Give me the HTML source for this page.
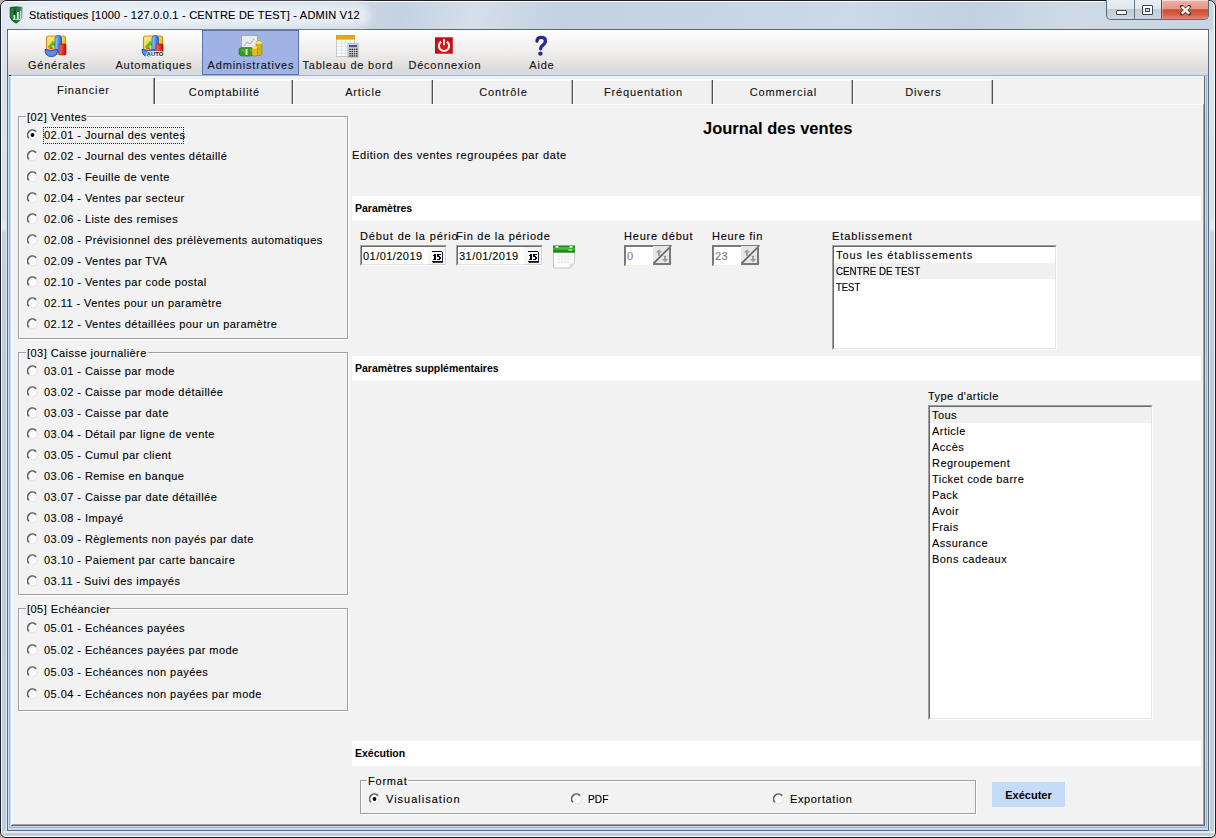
<!DOCTYPE html><html><head><meta charset="utf-8"><style>
*{margin:0;padding:0;box-sizing:border-box}
html,body{width:1216px;height:838px;overflow:hidden;background:#b8b2a8;font-family:"Liberation Sans",sans-serif;font-size:12px;color:#000}
.a{position:absolute}
.t{position:absolute;white-space:nowrap;line-height:14px;height:14px;color:#000;font-size:11px;letter-spacing:.45px;-webkit-text-stroke:0.1px #000;margin-top:-1px}
.bd{font-weight:bold;font-size:10.5px;letter-spacing:0;-webkit-text-stroke:0;margin-top:0}
#win{left:0;top:0;width:1216px;height:838px;border:1px solid #1a1e26;border-radius:7px 7px 6px 6px;background:linear-gradient(#dae4ee 0px,#d4e0ea 215px,#e2ecf6 226px,#c2d2de 232px,#b9ccd8 400px,#bccfdb 838px);overflow:hidden}
#winhl{left:0;top:0;width:1214px;height:836px;border:1px solid rgba(255,255,255,.9);border-radius:6px 6px 5px 5px}
#tbar{left:2px;top:1px;width:1210px;height:28px;background:linear-gradient(100deg,#e0e8f0 0%,#d4dee9 20%,#c5d2e0 33%,#d5dfea 39%,#c4d1df 46%,#c8d5e3 60%,#cdd9e6 70%,#c3d0de 80%,#cfdae6 88%,#c8d4e1 100%)}
#fbot{left:2px;top:830px;width:1212px;height:6px;background:linear-gradient(#e2eaee 0,#e2eaee 2px,#bfcdd9 2px,#c2cfdb 100%)}
#client{left:7px;top:29px;width:1202px;height:802px;border:1px solid #5c6774;background:#f2f2f2}
#toolbar{left:8px;top:30px;width:1200px;height:46px;border-bottom:1px solid #a3b3c6;background:linear-gradient(#fefefe 0px,#f7f6f5 12px,#e8e7e6 30px,#dddad9 40px,#d6dce4 43px,#d2d9e2 45px)}
#bluefr{left:8px;top:76px;width:1200px;height:754px;background:#c4dcfa}
#tabctl{left:11px;top:76px;width:1194px;height:750px;background:#f2f2f2;border-right:1px solid #696969;border-bottom:1px solid #696969}
#page{left:11px;top:104px;width:1193px;height:721px;border-top:1px solid #fff;border-left:1px solid #fff;border-right:1px solid #a0a0a0;border-bottom:1px solid #a0a0a0;background:#f2f2f2}
.tab{position:absolute;top:80px;height:24px;background:#f0f0f0;border-left:1px solid #fff;border-right:1px solid #505050;box-shadow:inset -1px 0 0 #b8b8b8, inset 0 1px 0 #fafafa}
.grp{position:absolute;border:1px solid #a0a0a0;box-shadow:1px 1px 0 #fff, inset 1px 1px 0 #fff}
.gl{position:absolute;background:#f2f2f2;padding:0 1px 0 0;line-height:14px;height:14px;white-space:nowrap;font-size:11px;letter-spacing:.45px;-webkit-text-stroke:0.1px #000;margin-top:-1px}
.rad{position:absolute;width:12px;height:12px}
.band{position:absolute;left:352px;width:849px;height:25px;background:#fff}
.sunk{position:absolute;background:#fff;border-top:1px solid #a0a0a0;border-left:1px solid #a0a0a0;border-right:1px solid #fff;border-bottom:1px solid #fff}
.sunk>.in{position:absolute;left:0;top:0;right:0;bottom:0;border-top:1px solid #696969;border-left:1px solid #696969;border-right:1px solid #e3e3e3;border-bottom:1px solid #e3e3e3}
</style></head><body>
<div id="win" class="a"><div id="tbar" class="a"></div><div id="fbot" class="a"></div><div id="winhl" class="a"></div></div>
<div id="client" class="a"></div>
<div id="toolbar" class="a"></div>
<div class="a" style="left:6px;top:29px;width:1px;height:802px;background:#e2eaee"></div>
<div class="a" style="left:1209px;top:29px;width:1px;height:802px;background:#e2eaee"></div>
<div id="bluefr" class="a"></div>
<div class="a" style="left:9px;top:77px;width:1px;height:751px;background:#9ab8de"></div>
<div class="a" style="left:10px;top:77px;width:1px;height:750px;background:#c8d8ee"></div>
<div class="a" style="left:1206px;top:77px;width:1px;height:751px;background:#9ab8de"></div>
<div class="a" style="left:1205px;top:77px;width:1px;height:750px;background:#c8d8ee"></div>
<div id="tabctl" class="a"></div>
<div class="a" style="left:12px;top:76px;width:1192px;height:3px;background:#edf0f3"></div>
<div class="a" style="left:155px;top:79px;width:838px;height:1px;background:#fafafa"></div>
<div class="a" style="left:8px;top:826px;width:1200px;height:1px;background:#c2d4e8"></div>
<div class="a" style="left:9px;top:827px;width:1198px;height:1px;background:#9ab6da"></div>
<svg class="a" style="left:9px;top:6px" width="15" height="18" viewBox="0 0 15 18">
<path d="M1.2 1.5 Q7 0.3 13 1.3 L13 11 Q12.5 14.5 7 17.2 Q1.8 14.5 1.2 11 Z" fill="#0c6a2e" stroke="#04401a" stroke-width="0.7"/>
<path d="M2.2 2.5 L4 2.3 L4 14 Q2.5 12.5 2.2 10.5Z" fill="#1c8a40"/>
<rect x="5" y="4" width="1.8" height="9" fill="#08361a"/><rect x="9" y="3" width="1.8" height="10" fill="#08361a"/>
<rect x="4.5" y="9" width="1.8" height="4" fill="#e8f0d0"/><rect x="8" y="6" width="1.8" height="7" fill="#d8ecd0"/><rect x="11" y="5" width="1.2" height="8" fill="#c8e0c8"/>
<rect x="4" y="12.8" width="8.5" height="0.9" fill="#d8f0d8"/></svg>
<div class="a" style="left:20px;top:4px;width:350px;height:22px;border-radius:11px;background:rgba(240,246,252,.8);filter:blur(5px)"></div>
<div class="t" style="left:29px;top:8px;font-size:11px;letter-spacing:.22px;color:#000;margin-top:-1px;top:9px">Statistiques [1000 - 127.0.0.1 - CENTRE DE TEST] - ADMIN V12</div>
<div class="a" style="left:1106px;top:0px;width:103px;height:20px;border:1px solid #5b6878;border-top:none;border-radius:0 0 5px 5px;overflow:hidden;background:linear-gradient(#e9eef4 0%,#dfe6ee 45%,#c3ccd7 50%,#cdd6e0 100%)">
<div class="a" style="left:27px;top:0;width:1px;height:19px;background:#6b7785"></div>
<div class="a" style="left:54px;top:0;width:48px;height:19px;background:linear-gradient(#eeb4a4 0%,#e4968a 45%,#d04a2c 52%,#d65e46 75%,#e28a78 100%);border-left:1px solid #6b4a48;box-shadow:inset 0 1px 0 rgba(255,255,255,.5),inset 1px 0 0 rgba(255,255,255,.35),inset -1px 0 0 rgba(255,255,255,.35)"></div>
</div>
<div class="a" style="left:1116px;top:10px;width:11px;height:5px;background:#fff;border:1px solid #3c4450;border-radius:1px"></div>
<div class="a" style="left:1142px;top:5px;width:11px;height:10px;background:#fff;border:1px solid #3c4450;border-radius:1px"><div class="a" style="left:2px;top:2px;width:5px;height:4px;border:1px solid #3c4450;background:#c5ced8"></div></div>
<svg class="a" style="left:1179px;top:5px" width="13" height="11" viewBox="0 0 13 11"><path d="M2.8 1.6 L10.2 8.6 M10.2 1.6 L2.8 8.6" stroke="#4a3530" stroke-width="3.8" stroke-linecap="round"/><path d="M2.8 1.6 L10.2 8.6 M10.2 1.6 L2.8 8.6" stroke="#f8f4ee" stroke-width="2.4" stroke-linecap="butt"/></svg>
<div class="a" style="left:202px;top:30px;width:97px;height:45px;background:#9fb4e4;border:1px solid #5a72b0"></div>
<div class="t" style="left:8px;top:59px;width:97px;text-align:center;color:#161616;letter-spacing:.8px;text-indent:.8px">Générales</div>
<div class="t" style="left:105px;top:59px;width:97px;text-align:center;color:#161616;letter-spacing:.8px;text-indent:.8px">Automatiques</div>
<div class="t" style="left:202px;top:59px;width:97px;text-align:center;color:#161616;letter-spacing:.8px;text-indent:.8px">Administratives</div>
<div class="t" style="left:299px;top:59px;width:97px;text-align:center;color:#161616;letter-spacing:.8px;text-indent:.8px">Tableau de bord</div>
<div class="t" style="left:396px;top:59px;width:97px;text-align:center;color:#161616;letter-spacing:.8px;text-indent:.8px">Déconnexion</div>
<div class="t" style="left:493px;top:59px;width:97px;text-align:center;color:#161616;letter-spacing:.8px;text-indent:.8px">Aide</div>
<svg class="a" style="left:44px;top:34px" width="24" height="24" viewBox="0 0 24 24">
<defs><linearGradient id="gy0" x1="0" y1="0" x2="1" y2="1"><stop offset="0" stop-color="#fff08a"/><stop offset=".5" stop-color="#f4d030"/><stop offset="1" stop-color="#e89010"/></linearGradient>
<linearGradient id="gb0" x1="0" y1="0" x2="1" y2="0"><stop offset="0" stop-color="#8fd0ff"/><stop offset="1" stop-color="#1a5fd8"/></linearGradient>
<linearGradient id="gr0" x1="0" y1="0" x2="1" y2="0"><stop offset="0" stop-color="#ff6a5a"/><stop offset="1" stop-color="#c80808"/></linearGradient></defs>
<rect x="2.5" y="2" width="19" height="18.5" rx="2" fill="url(#gy0)" stroke="#c8901a" stroke-width="1.2"/>
<path d="M5 14 L9 9 L12 11" stroke="#58c030" stroke-width="3" fill="none"/>
<rect x="11" y="1.5" width="6.5" height="17" rx="3" fill="url(#gb0)" stroke="#2050b0" stroke-width=".7"/>
<rect x="15" y="10" width="7" height="11" rx="1" fill="url(#gr0)" stroke="#a01010" stroke-width=".6"/>
<path d="M1 15.5 Q1 22.5 7.5 22.5 Q13.5 22.5 13.5 15.5 L7.5 16.5 Z" fill="#5a8cf0" stroke="#1e48b0" stroke-width="1"/>
<path d="M5 14.5 L8 13 L9 15.5Z" fill="#e04020"/>
</svg>
<svg class="a" style="left:141px;top:34px" width="24" height="24" viewBox="0 0 24 24">
<defs><linearGradient id="gy1" x1="0" y1="0" x2="1" y2="1"><stop offset="0" stop-color="#fff08a"/><stop offset=".5" stop-color="#f4d030"/><stop offset="1" stop-color="#e89010"/></linearGradient>
<linearGradient id="gb1" x1="0" y1="0" x2="1" y2="0"><stop offset="0" stop-color="#8fd0ff"/><stop offset="1" stop-color="#1a5fd8"/></linearGradient>
<linearGradient id="gr1" x1="0" y1="0" x2="1" y2="0"><stop offset="0" stop-color="#ff6a5a"/><stop offset="1" stop-color="#c80808"/></linearGradient></defs>
<rect x="2.5" y="2" width="19" height="18.5" rx="2" fill="url(#gy1)" stroke="#c8901a" stroke-width="1.2"/>
<path d="M5 14 L9 9 L12 11" stroke="#58c030" stroke-width="3" fill="none"/>
<rect x="11" y="1.5" width="6.5" height="17" rx="3" fill="url(#gb1)" stroke="#2050b0" stroke-width=".7"/>
<rect x="15" y="10" width="7" height="11" rx="1" fill="url(#gr1)" stroke="#a01010" stroke-width=".6"/>
<path d="M1 15.5 Q1 22.5 7.5 22.5 Q13.5 22.5 13.5 15.5 L7.5 16.5 Z" fill="#5a8cf0" stroke="#1e48b0" stroke-width="1"/>
<path d="M5 14.5 L8 13 L9 15.5Z" fill="#e04020"/>
<text x="14" y="21.5" font-family="Liberation Sans" font-weight="bold" font-size="6" text-anchor="middle" fill="#111" stroke="#fff" stroke-width="1.6" paint-order="stroke">AUTO</text></svg>
<svg class="a" style="left:238px;top:34px" width="26" height="24" viewBox="0 0 26 24">
<rect x="3.5" y="1.5" width="16" height="14" fill="#ececec" stroke="#9aa0a8" stroke-width=".8"/>
<path d="M6 12 L9 8 L12 10 L16 5" stroke="#a0a8b8" stroke-width="1" fill="none"/>
<path d="M1 16 Q1 13.5 4 13.5 L13 13.5 Q16 13.5 16 16 L16 19 Q16 22 13 22 L4 22 Q1 22 1 19Z" fill="#3a9a22" stroke="#2a7012" stroke-width=".6"/>
<rect x="7.5" y="15" width="2" height="6" fill="#d8f0c8"/><path d="M4 15.5 L6 17 M12 15.5 L14 17" stroke="#8ed070" stroke-width="1"/>
<rect x="18" y="7" width="6" height="14.5" rx="2" fill="#d4b018" stroke="#a08008" stroke-width=".6"/>
<ellipse cx="21" cy="8.5" rx="3" ry="1.5" fill="#f6e070"/>
<rect x="14" y="12.5" width="5.5" height="9.5" rx="2" fill="#e0bc20" stroke="#a08008" stroke-width=".6"/>
<ellipse cx="16.75" cy="13.5" rx="2.75" ry="1.3" fill="#fae880"/>
</svg>
<svg class="a" style="left:335px;top:34px" width="25" height="24" viewBox="0 0 25 24">
<rect x="1.5" y="1.5" width="18" height="21" fill="#fafafa" stroke="#bcbcbc" stroke-width=".8"/>
<rect x="1.5" y="1.3" width="18" height="3.9" fill="#e6a812" stroke="#c89010" stroke-width=".5"/>
<path d="M2 9 H19 M2 12.5 H19 M2 16 H19 M2 19.5 H19 M6.5 5.5 V22 M11 5.5 V22 M15.5 5.5 V22" stroke="#d4dce6" stroke-width=".7"/>
<rect x="13" y="9.8" width="10" height="13.2" fill="#e8eaee" stroke="#8a92a0" stroke-width=".7"/>
<rect x="14" y="11" width="8" height="2.3" fill="#4a5878"/>
<g fill="#222"><rect x="14.3" y="14.6" width="1.5" height="1.4"/><rect x="16.5" y="14.6" width="1.5" height="1.4"/><rect x="18.7" y="14.6" width="1.5" height="1.4"/><rect x="20.9" y="14.6" width="1.5" height="1.4"/><rect x="14.3" y="16.8" width="1.5" height="1.4"/><rect x="16.5" y="16.8" width="1.5" height="1.4"/><rect x="18.7" y="16.8" width="1.5" height="1.4"/><rect x="20.9" y="16.8" width="1.5" height="1.4"/><rect x="14.3" y="19.0" width="1.5" height="1.4"/><rect x="16.5" y="19.0" width="1.5" height="1.4"/><rect x="18.7" y="19.0" width="1.5" height="1.4"/><rect x="20.9" y="19.0" width="1.5" height="1.4"/><rect x="14.3" y="21.2" width="1.5" height="1.4"/><rect x="16.5" y="21.2" width="1.5" height="1.4"/><rect x="18.7" y="21.2" width="1.5" height="1.4"/><rect x="20.9" y="21.2" width="1.5" height="1.4"/></g>
</svg>
<svg class="a" style="left:434px;top:36px" width="20" height="19" viewBox="0 0 20 19">
<defs><radialGradient id="dg" cx=".5" cy=".55" r=".6"><stop offset="0" stop-color="#e8101a"/><stop offset=".7" stop-color="#d01018"/><stop offset="1" stop-color="#b80c12"/></radialGradient></defs>
<rect x="1" y="1.3" width="17.8" height="16.4" fill="url(#dg)"/>
<path d="M7.2 5.6 A5.1 5.1 0 1 0 12.8 5.6" fill="none" stroke="#fff4f0" stroke-width="2.1"/>
<rect x="9" y="3" width="2" height="6.2" fill="#fff4f0"/>
</svg>
<svg class="a" style="left:533px;top:34px" width="16" height="24" viewBox="0 0 16 24"><path d="M4 7.2 Q4 3.3 8.3 3.3 Q12.4 3.3 12.4 6.7 Q12.4 9.3 9.7 11.3 Q7.6 12.8 7.6 14.8" fill="none" stroke="#2a2a90" stroke-width="3.3" stroke-linecap="round"/><ellipse cx="7.4" cy="19.7" rx="2.2" ry="2.1" fill="#2a2a90"/></svg>
<div class="tab" style="left:155px;width:138px"></div>
<div class="t" style="left:155px;top:86px;width:138px;text-align:center;color:#111;letter-spacing:.85px;text-indent:.85px">Comptabilité</div>
<div class="tab" style="left:293px;width:140px"></div>
<div class="t" style="left:293px;top:86px;width:140px;text-align:center;color:#111;letter-spacing:.85px;text-indent:.85px">Article</div>
<div class="tab" style="left:433px;width:140px"></div>
<div class="t" style="left:433px;top:86px;width:140px;text-align:center;color:#111;letter-spacing:.85px;text-indent:.85px">Contrôle</div>
<div class="tab" style="left:573px;width:140px"></div>
<div class="t" style="left:573px;top:86px;width:140px;text-align:center;color:#111;letter-spacing:.85px;text-indent:.85px">Fréquentation</div>
<div class="tab" style="left:713px;width:140px"></div>
<div class="t" style="left:713px;top:86px;width:140px;text-align:center;color:#111;letter-spacing:.85px;text-indent:.85px">Commercial</div>
<div class="tab" style="left:853px;width:140px"></div>
<div class="t" style="left:853px;top:86px;width:140px;text-align:center;color:#111;letter-spacing:.85px;text-indent:.85px">Divers</div>
<div class="a" style="left:12px;top:76px;width:142px;height:2px;background:#fafafa"></div>
<div class="a" style="left:153px;top:78px;width:1px;height:26px;background:#9a9a9a"></div>
<div class="a" style="left:154px;top:78px;width:1px;height:26px;background:#505050"></div>
<div class="t" style="left:12px;top:84px;width:142px;text-align:center;color:#111;letter-spacing:.85px;text-indent:.85px">Financier</div>
<div class="a" style="left:9px;top:75px;width:2px;height:1px;background:#111"></div>
<div id="pagetop" class="a" style="left:155px;top:104px;width:1049px;height:1px;background:#fff"></div>
<div class="a" style="left:11px;top:76px;width:1px;height:749px;background:#fff"></div>
<div class="a" style="left:1203px;top:104px;width:1px;height:721px;background:#a0a0a0"></div>
<div class="a" style="left:12px;top:824px;width:1192px;height:1px;background:#a0a0a0"></div>
<div class="grp" style="left:18px;top:116px;width:330px;height:223px"></div>
<div class="gl" style="left:26px;top:111px;width:61px;padding-left:1px">[02] Ventes</div>
<svg class="rad" style="left:27px;top:129px" width="12" height="12" viewBox="0 0 12 12"><circle cx="5.5" cy="6" r="4.7" fill="#fdfdfd" stroke="#e6e6e6" stroke-width="1.1"/><path d="M1.9 9.2 A4.7 4.7 0 0 1 9.1 2.6" fill="none" stroke="#5e5e5e" stroke-width="1.6"/><circle cx="5.5" cy="6" r="1.9" fill="#000"/></svg>
<div class="t" style="left:44px;top:129px;">02.01 - Journal des ventes</div>
<svg class="rad" style="left:27px;top:150px" width="12" height="12" viewBox="0 0 12 12"><circle cx="5.5" cy="6" r="4.7" fill="#fbfbfb" stroke="#e6e6e6" stroke-width="1.1"/><path d="M1.9 9.2 A4.7 4.7 0 0 1 9.1 2.6" fill="none" stroke="#5e5e5e" stroke-width="1.6"/></svg>
<div class="t" style="left:44px;top:150px;">02.02 - Journal des ventes détaillé</div>
<svg class="rad" style="left:27px;top:171px" width="12" height="12" viewBox="0 0 12 12"><circle cx="5.5" cy="6" r="4.7" fill="#fbfbfb" stroke="#e6e6e6" stroke-width="1.1"/><path d="M1.9 9.2 A4.7 4.7 0 0 1 9.1 2.6" fill="none" stroke="#5e5e5e" stroke-width="1.6"/></svg>
<div class="t" style="left:44px;top:171px;">02.03 - Feuille de vente</div>
<svg class="rad" style="left:27px;top:192px" width="12" height="12" viewBox="0 0 12 12"><circle cx="5.5" cy="6" r="4.7" fill="#fbfbfb" stroke="#e6e6e6" stroke-width="1.1"/><path d="M1.9 9.2 A4.7 4.7 0 0 1 9.1 2.6" fill="none" stroke="#5e5e5e" stroke-width="1.6"/></svg>
<div class="t" style="left:44px;top:192px;">02.04 - Ventes par secteur</div>
<svg class="rad" style="left:27px;top:213px" width="12" height="12" viewBox="0 0 12 12"><circle cx="5.5" cy="6" r="4.7" fill="#fbfbfb" stroke="#e6e6e6" stroke-width="1.1"/><path d="M1.9 9.2 A4.7 4.7 0 0 1 9.1 2.6" fill="none" stroke="#5e5e5e" stroke-width="1.6"/></svg>
<div class="t" style="left:44px;top:213px;">02.06 - Liste des remises</div>
<svg class="rad" style="left:27px;top:234px" width="12" height="12" viewBox="0 0 12 12"><circle cx="5.5" cy="6" r="4.7" fill="#fbfbfb" stroke="#e6e6e6" stroke-width="1.1"/><path d="M1.9 9.2 A4.7 4.7 0 0 1 9.1 2.6" fill="none" stroke="#5e5e5e" stroke-width="1.6"/></svg>
<div class="t" style="left:44px;top:234px;">02.08 - Prévisionnel des prélèvements automatiques</div>
<svg class="rad" style="left:27px;top:255px" width="12" height="12" viewBox="0 0 12 12"><circle cx="5.5" cy="6" r="4.7" fill="#fbfbfb" stroke="#e6e6e6" stroke-width="1.1"/><path d="M1.9 9.2 A4.7 4.7 0 0 1 9.1 2.6" fill="none" stroke="#5e5e5e" stroke-width="1.6"/></svg>
<div class="t" style="left:44px;top:255px;">02.09 - Ventes par TVA</div>
<svg class="rad" style="left:27px;top:276px" width="12" height="12" viewBox="0 0 12 12"><circle cx="5.5" cy="6" r="4.7" fill="#fbfbfb" stroke="#e6e6e6" stroke-width="1.1"/><path d="M1.9 9.2 A4.7 4.7 0 0 1 9.1 2.6" fill="none" stroke="#5e5e5e" stroke-width="1.6"/></svg>
<div class="t" style="left:44px;top:276px;">02.10 - Ventes par code postal</div>
<svg class="rad" style="left:27px;top:297px" width="12" height="12" viewBox="0 0 12 12"><circle cx="5.5" cy="6" r="4.7" fill="#fbfbfb" stroke="#e6e6e6" stroke-width="1.1"/><path d="M1.9 9.2 A4.7 4.7 0 0 1 9.1 2.6" fill="none" stroke="#5e5e5e" stroke-width="1.6"/></svg>
<div class="t" style="left:44px;top:297px;">02.11 - Ventes pour un paramètre</div>
<svg class="rad" style="left:27px;top:318px" width="12" height="12" viewBox="0 0 12 12"><circle cx="5.5" cy="6" r="4.7" fill="#fbfbfb" stroke="#e6e6e6" stroke-width="1.1"/><path d="M1.9 9.2 A4.7 4.7 0 0 1 9.1 2.6" fill="none" stroke="#5e5e5e" stroke-width="1.6"/></svg>
<div class="t" style="left:44px;top:318px;">02.12 - Ventes détaillées pour un paramètre</div>
<div class="a" style="left:43px;top:127px;width:141px;height:17px;border:1px dotted #222"></div>
<div class="grp" style="left:18px;top:352px;width:330px;height:243px"></div>
<div class="gl" style="left:26px;top:347px;width:122px;padding-left:1px">[03] Caisse journalière</div>
<svg class="rad" style="left:27px;top:365px" width="12" height="12" viewBox="0 0 12 12"><circle cx="5.5" cy="6" r="4.7" fill="#fbfbfb" stroke="#e6e6e6" stroke-width="1.1"/><path d="M1.9 9.2 A4.7 4.7 0 0 1 9.1 2.6" fill="none" stroke="#5e5e5e" stroke-width="1.6"/></svg>
<div class="t" style="left:44px;top:365px;">03.01 - Caisse par mode</div>
<svg class="rad" style="left:27px;top:386px" width="12" height="12" viewBox="0 0 12 12"><circle cx="5.5" cy="6" r="4.7" fill="#fbfbfb" stroke="#e6e6e6" stroke-width="1.1"/><path d="M1.9 9.2 A4.7 4.7 0 0 1 9.1 2.6" fill="none" stroke="#5e5e5e" stroke-width="1.6"/></svg>
<div class="t" style="left:44px;top:386px;">03.02 - Caisse par mode détaillée</div>
<svg class="rad" style="left:27px;top:407px" width="12" height="12" viewBox="0 0 12 12"><circle cx="5.5" cy="6" r="4.7" fill="#fbfbfb" stroke="#e6e6e6" stroke-width="1.1"/><path d="M1.9 9.2 A4.7 4.7 0 0 1 9.1 2.6" fill="none" stroke="#5e5e5e" stroke-width="1.6"/></svg>
<div class="t" style="left:44px;top:407px;">03.03 - Caisse par date</div>
<svg class="rad" style="left:27px;top:428px" width="12" height="12" viewBox="0 0 12 12"><circle cx="5.5" cy="6" r="4.7" fill="#fbfbfb" stroke="#e6e6e6" stroke-width="1.1"/><path d="M1.9 9.2 A4.7 4.7 0 0 1 9.1 2.6" fill="none" stroke="#5e5e5e" stroke-width="1.6"/></svg>
<div class="t" style="left:44px;top:428px;">03.04 - Détail par ligne de vente</div>
<svg class="rad" style="left:27px;top:449px" width="12" height="12" viewBox="0 0 12 12"><circle cx="5.5" cy="6" r="4.7" fill="#fbfbfb" stroke="#e6e6e6" stroke-width="1.1"/><path d="M1.9 9.2 A4.7 4.7 0 0 1 9.1 2.6" fill="none" stroke="#5e5e5e" stroke-width="1.6"/></svg>
<div class="t" style="left:44px;top:449px;">03.05 - Cumul par client</div>
<svg class="rad" style="left:27px;top:470px" width="12" height="12" viewBox="0 0 12 12"><circle cx="5.5" cy="6" r="4.7" fill="#fbfbfb" stroke="#e6e6e6" stroke-width="1.1"/><path d="M1.9 9.2 A4.7 4.7 0 0 1 9.1 2.6" fill="none" stroke="#5e5e5e" stroke-width="1.6"/></svg>
<div class="t" style="left:44px;top:470px;">03.06 - Remise en banque</div>
<svg class="rad" style="left:27px;top:491px" width="12" height="12" viewBox="0 0 12 12"><circle cx="5.5" cy="6" r="4.7" fill="#fbfbfb" stroke="#e6e6e6" stroke-width="1.1"/><path d="M1.9 9.2 A4.7 4.7 0 0 1 9.1 2.6" fill="none" stroke="#5e5e5e" stroke-width="1.6"/></svg>
<div class="t" style="left:44px;top:491px;">03.07 - Caisse par date détaillée</div>
<svg class="rad" style="left:27px;top:512px" width="12" height="12" viewBox="0 0 12 12"><circle cx="5.5" cy="6" r="4.7" fill="#fbfbfb" stroke="#e6e6e6" stroke-width="1.1"/><path d="M1.9 9.2 A4.7 4.7 0 0 1 9.1 2.6" fill="none" stroke="#5e5e5e" stroke-width="1.6"/></svg>
<div class="t" style="left:44px;top:512px;">03.08 - Impayé</div>
<svg class="rad" style="left:27px;top:533px" width="12" height="12" viewBox="0 0 12 12"><circle cx="5.5" cy="6" r="4.7" fill="#fbfbfb" stroke="#e6e6e6" stroke-width="1.1"/><path d="M1.9 9.2 A4.7 4.7 0 0 1 9.1 2.6" fill="none" stroke="#5e5e5e" stroke-width="1.6"/></svg>
<div class="t" style="left:44px;top:533px;">03.09 - Règlements non payés par date</div>
<svg class="rad" style="left:27px;top:554px" width="12" height="12" viewBox="0 0 12 12"><circle cx="5.5" cy="6" r="4.7" fill="#fbfbfb" stroke="#e6e6e6" stroke-width="1.1"/><path d="M1.9 9.2 A4.7 4.7 0 0 1 9.1 2.6" fill="none" stroke="#5e5e5e" stroke-width="1.6"/></svg>
<div class="t" style="left:44px;top:554px;">03.10 - Paiement par carte bancaire</div>
<svg class="rad" style="left:27px;top:575px" width="12" height="12" viewBox="0 0 12 12"><circle cx="5.5" cy="6" r="4.7" fill="#fbfbfb" stroke="#e6e6e6" stroke-width="1.1"/><path d="M1.9 9.2 A4.7 4.7 0 0 1 9.1 2.6" fill="none" stroke="#5e5e5e" stroke-width="1.6"/></svg>
<div class="t" style="left:44px;top:575px;">03.11 - Suivi des impayés</div>
<div class="grp" style="left:18px;top:608px;width:330px;height:103px"></div>
<div class="gl" style="left:26px;top:603px;width:82px;padding-left:1px">[05] Echéancier</div>
<svg class="rad" style="left:27px;top:622px" width="12" height="12" viewBox="0 0 12 12"><circle cx="5.5" cy="6" r="4.7" fill="#fbfbfb" stroke="#e6e6e6" stroke-width="1.1"/><path d="M1.9 9.2 A4.7 4.7 0 0 1 9.1 2.6" fill="none" stroke="#5e5e5e" stroke-width="1.6"/></svg>
<div class="t" style="left:44px;top:622px;">05.01 - Echéances payées</div>
<svg class="rad" style="left:27px;top:644px" width="12" height="12" viewBox="0 0 12 12"><circle cx="5.5" cy="6" r="4.7" fill="#fbfbfb" stroke="#e6e6e6" stroke-width="1.1"/><path d="M1.9 9.2 A4.7 4.7 0 0 1 9.1 2.6" fill="none" stroke="#5e5e5e" stroke-width="1.6"/></svg>
<div class="t" style="left:44px;top:644px;">05.02 - Echéances payées par mode</div>
<svg class="rad" style="left:27px;top:666px" width="12" height="12" viewBox="0 0 12 12"><circle cx="5.5" cy="6" r="4.7" fill="#fbfbfb" stroke="#e6e6e6" stroke-width="1.1"/><path d="M1.9 9.2 A4.7 4.7 0 0 1 9.1 2.6" fill="none" stroke="#5e5e5e" stroke-width="1.6"/></svg>
<div class="t" style="left:44px;top:666px;">05.03 - Echéances non payées</div>
<svg class="rad" style="left:27px;top:688px" width="12" height="12" viewBox="0 0 12 12"><circle cx="5.5" cy="6" r="4.7" fill="#fbfbfb" stroke="#e6e6e6" stroke-width="1.1"/><path d="M1.9 9.2 A4.7 4.7 0 0 1 9.1 2.6" fill="none" stroke="#5e5e5e" stroke-width="1.6"/></svg>
<div class="t" style="left:44px;top:688px;">05.04 - Echéances non payées par mode</div>
<div class="t" style="left:703px;top:118px;font-weight:bold;font-size:16.5px;letter-spacing:0;-webkit-text-stroke:0;margin-top:0;line-height:20px;height:20px">Journal des ventes</div>
<div class="t" style="left:352px;top:149px;letter-spacing:.6px">Edition des ventes regroupées par date</div>
<div class="band" style="top:196px"></div>
<div class="t bd" style="left:355px;top:201px;">Paramètres</div>
<div class="t" style="left:360px;top:230px;letter-spacing:.87px">Début de la pério</div>
<div class="t" style="left:456px;top:230px;letter-spacing:.74px">Fin de la période</div>
<div class="t" style="left:624px;top:230px;letter-spacing:.8px">Heure début</div>
<div class="t" style="left:712px;top:230px;letter-spacing:.72px">Heure fin</div>
<div class="t" style="left:832px;top:230px;letter-spacing:.9px">Etablissement</div>
<div class="sunk" style="left:360px;top:245px;width:87px;height:21px"><div class="in"></div></div>
<div class="t" style="left:363px;top:250px;">01/01/2019</div>
<div class="a" style="left:427px;top:247px;width:19px;height:18px;background:#f7f7f7;border-left:1px solid #fff;border-right:1px solid #d0d0d0;border-bottom:1px solid #d0d0d0"></div>
<svg class="a" style="left:432px;top:251px" width="12" height="12" viewBox="0 0 12 12" shape-rendering="crispEdges"><rect x="0" y="0" width="10" height="11" fill="#fff"/><rect x="0" y="0" width="10" height="1" fill="#000"/><rect x="0" y="10" width="11" height="1" fill="#000"/><rect x="10" y="1" width="1" height="11" fill="#1a1a50"/><rect x="1" y="11" width="10" height="1" fill="#3a3a70"/>
<g fill="#000"><rect x="2" y="3" width="2" height="6"/><rect x="1" y="4" width="1" height="1"/><rect x="1" y="8" width="3" height="1"/><rect x="5" y="3" width="4" height="1"/><rect x="5" y="4" width="2" height="1"/><rect x="5" y="5" width="3" height="1"/><rect x="7" y="6" width="2" height="2"/><rect x="5" y="8" width="3" height="1"/></g></svg>
<div class="sunk" style="left:456px;top:245px;width:87px;height:21px"><div class="in"></div></div>
<div class="t" style="left:459px;top:250px;">31/01/2019</div>
<div class="a" style="left:523px;top:247px;width:19px;height:18px;background:#f7f7f7;border-left:1px solid #fff;border-right:1px solid #d0d0d0;border-bottom:1px solid #d0d0d0"></div>
<svg class="a" style="left:528px;top:251px" width="12" height="12" viewBox="0 0 12 12" shape-rendering="crispEdges"><rect x="0" y="0" width="10" height="11" fill="#fff"/><rect x="0" y="0" width="10" height="1" fill="#000"/><rect x="0" y="10" width="11" height="1" fill="#000"/><rect x="10" y="1" width="1" height="11" fill="#1a1a50"/><rect x="1" y="11" width="10" height="1" fill="#3a3a70"/>
<g fill="#000"><rect x="2" y="3" width="2" height="6"/><rect x="1" y="4" width="1" height="1"/><rect x="1" y="8" width="3" height="1"/><rect x="5" y="3" width="4" height="1"/><rect x="5" y="4" width="2" height="1"/><rect x="5" y="5" width="3" height="1"/><rect x="7" y="6" width="2" height="2"/><rect x="5" y="8" width="3" height="1"/></g></svg>
<svg class="a" style="left:551px;top:244px" width="26" height="26" viewBox="0 0 26 26">
<defs><linearGradient id="calg" x1="0" y1="0" x2="0" y2="1"><stop offset="0" stop-color="#108010"/><stop offset=".45" stop-color="#38b030"/><stop offset="1" stop-color="#0a780a"/></linearGradient></defs>
<path d="M2.5 8.5 H23.5 V19 L19 24 H2.5 Z" fill="#fdfdfd" stroke="#c4c4c4" stroke-width="1"/>
<rect x="2" y="1.5" width="22" height="7" fill="url(#calg)"/>
<rect x="8" y="3" width="10" height="2.5" fill="#50c048" opacity=".7"/>
<rect x="17.5" y="5" width="4" height="2" fill="#90f080" opacity=".8"/>
<rect x="4.5" y="2" width="3" height="2" fill="#c8f0c0"/><rect x="18.5" y="2" width="3" height="2" fill="#c8f0c0"/>
<path d="M5 12 H21 M5 15 H21 M5 18 H20 M8 10.5 V20 M11 10.5 V20 M14 10.5 V20 M17 10.5 V20" stroke="#e4e4ec" stroke-width=".8"/>
<path d="M19 24 L19 19.5 L23.5 19.5 Z" fill="#d8d8d8"/>
</svg>
<div class="a" style="left:624px;top:245px;width:48px;height:21px;background:#fff;border-top:2px solid #7a7a7a;border-left:2px solid #7a7a7a;border-right:1px solid #eee;border-bottom:1px solid #eee"></div>
<div class="t" style="left:627px;top:250px;color:#8c8c8c">0</div>
<svg class="a" style="left:653px;top:246px" width="18" height="19" viewBox="0 0 18 19">
<rect x="0" y="0" width="17" height="18" fill="#e6e6e6"/>
<path d="M0 18 L17 1" stroke="#5e5e5e" stroke-width="1.6"/>
<rect x="0" y="17" width="17" height="2" fill="#7a7a7a"/><rect x="16" y="0" width="2" height="19" fill="#7a7a7a"/>
<path d="M6 3.4 L9.2 6.6 H7 V9.8 H5 V6.6 H2.8Z" fill="#9c9c9c"/>
<path d="M12 16.2 L8.8 13 H11 V9.8 H13 V13 H15.2Z" fill="#9c9c9c"/>
</svg>
<div class="a" style="left:712px;top:245px;width:48px;height:21px;background:#fff;border-top:2px solid #7a7a7a;border-left:2px solid #7a7a7a;border-right:1px solid #eee;border-bottom:1px solid #eee"></div>
<div class="t" style="left:715px;top:250px;color:#8c8c8c">23</div>
<svg class="a" style="left:741px;top:246px" width="18" height="19" viewBox="0 0 18 19">
<rect x="0" y="0" width="17" height="18" fill="#e6e6e6"/>
<path d="M0 18 L17 1" stroke="#5e5e5e" stroke-width="1.6"/>
<rect x="0" y="17" width="17" height="2" fill="#7a7a7a"/><rect x="16" y="0" width="2" height="19" fill="#7a7a7a"/>
<path d="M6 3.4 L9.2 6.6 H7 V9.8 H5 V6.6 H2.8Z" fill="#9c9c9c"/>
<path d="M12 16.2 L8.8 13 H11 V9.8 H13 V13 H15.2Z" fill="#9c9c9c"/>
</svg>
<div class="sunk" style="left:832px;top:245px;width:225px;height:105px"><div class="in"></div></div>
<div class="a" style="left:834px;top:263px;width:221px;height:16px;background:#f0f0f0"></div>
<div class="t" style="left:836px;top:249px;letter-spacing:.88px">Tous les établissements</div>
<div class="t" style="left:836px;top:265px;letter-spacing:0;transform:scaleX(.89);transform-origin:0 0;-webkit-text-stroke:.15px #000">CENTRE DE TEST</div>
<div class="t" style="left:836px;top:281px;letter-spacing:0;transform:scaleX(.86);transform-origin:0 0;-webkit-text-stroke:.15px #000">TEST</div>
<div class="band" style="top:356px"></div>
<div class="t bd" style="left:355px;top:361px;">Paramètres supplémentaires</div>
<div class="t" style="left:928px;top:390px;">Type d&#39;article</div>
<div class="sunk" style="left:928px;top:405px;width:225px;height:315px"><div class="in"></div></div>
<div class="a" style="left:930px;top:407px;width:221px;height:16px;background:#f0f0f0"></div>
<div class="t" style="left:932px;top:409px;">Tous</div>
<div class="t" style="left:932px;top:425px;">Article</div>
<div class="t" style="left:932px;top:441px;">Accès</div>
<div class="t" style="left:932px;top:457px;">Regroupement</div>
<div class="t" style="left:932px;top:473px;">Ticket code barre</div>
<div class="t" style="left:932px;top:489px;">Pack</div>
<div class="t" style="left:932px;top:505px;">Avoir</div>
<div class="t" style="left:932px;top:521px;">Frais</div>
<div class="t" style="left:932px;top:537px;">Assurance</div>
<div class="t" style="left:932px;top:553px;">Bons cadeaux</div>
<div class="band" style="top:741px"></div>
<div class="t bd" style="left:355px;top:746px;">Exécution</div>
<div class="grp" style="left:360px;top:780px;width:616px;height:34px"></div>
<div class="gl" style="left:367px;top:775px;width:41px;padding-left:1px;letter-spacing:.78px">Format</div>
<svg class="rad" style="left:369px;top:793px" width="12" height="12" viewBox="0 0 12 12"><circle cx="5.5" cy="6" r="4.7" fill="#fdfdfd" stroke="#e6e6e6" stroke-width="1.1"/><path d="M1.9 9.2 A4.7 4.7 0 0 1 9.1 2.6" fill="none" stroke="#5e5e5e" stroke-width="1.6"/><circle cx="5.5" cy="6" r="1.9" fill="#000"/></svg>
<div class="t" style="left:386px;top:793px;letter-spacing:1px">Visualisation</div>
<svg class="rad" style="left:571px;top:793px" width="12" height="12" viewBox="0 0 12 12"><circle cx="5.5" cy="6" r="4.7" fill="#fbfbfb" stroke="#e6e6e6" stroke-width="1.1"/><path d="M1.9 9.2 A4.7 4.7 0 0 1 9.1 2.6" fill="none" stroke="#5e5e5e" stroke-width="1.6"/></svg>
<div class="t" style="left:588px;top:793px;letter-spacing:0;transform:scaleX(.93);transform-origin:0 0;-webkit-text-stroke:.15px #000">PDF</div>
<svg class="rad" style="left:773px;top:793px" width="12" height="12" viewBox="0 0 12 12"><circle cx="5.5" cy="6" r="4.7" fill="#fbfbfb" stroke="#e6e6e6" stroke-width="1.1"/><path d="M1.9 9.2 A4.7 4.7 0 0 1 9.1 2.6" fill="none" stroke="#5e5e5e" stroke-width="1.6"/></svg>
<div class="t" style="left:790px;top:793px;letter-spacing:.63px">Exportation</div>
<div class="a" style="left:992px;top:782px;width:73px;height:25px;background:#c4dcf8"></div>
<div class="t" style="left:992px;top:788px;width:73px;text-align:center;font-weight:bold;font-size:11px;letter-spacing:0;-webkit-text-stroke:0;margin-top:0">Exécuter</div>
</body></html>
